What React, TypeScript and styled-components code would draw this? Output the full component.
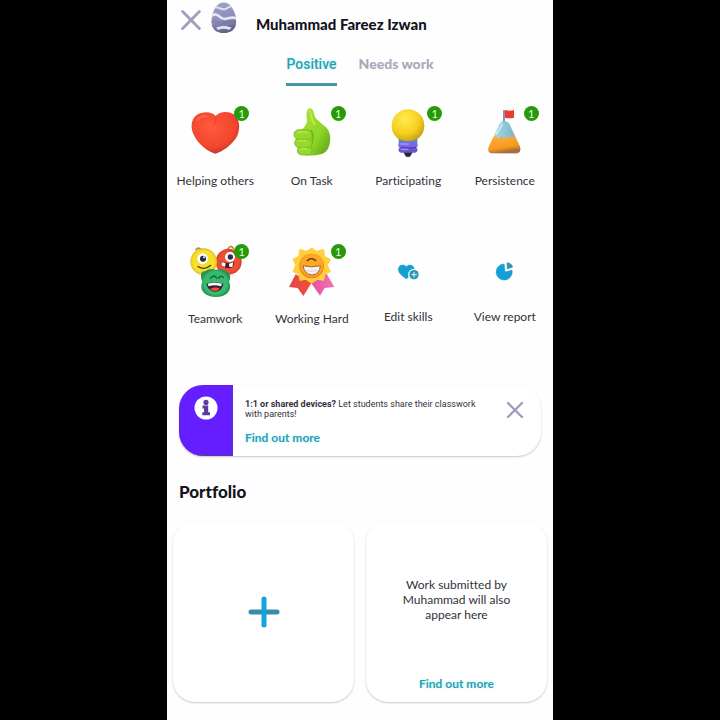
import React, { useState } from "react";
import styled, { createGlobalStyle } from "styled-components";

const GlobalStyle = createGlobalStyle`
  *, *::before, *::after { box-sizing: border-box; }
  body { margin: 0; background: #000; }
  button { border: 0; padding: 0; background: none; font: inherit; color: inherit; cursor: pointer; }
  svg { display: block; }
`;

const Screen = styled.main`
  width: 100%;
  max-width: 386px;
  min-height: 100vh;
  margin: 0 auto;
  padding-bottom: 18px;
  background: #fefefe;
  color: #33313c;
  font-family: Lato, "Open Sans", sans-serif;
  font-size: 12px;
  line-height: 15px;
  font-variant-ligatures: none;
`;

const Header = styled.header`
  display: flex;
  align-items: flex-start;
  height: 48px;
  padding-left: 12px;
`;

const CloseButton = styled.button`
  display: grid;
  place-items: center;
  width: 22px;
  height: 22px;
  margin-top: 8px;
  flex: none;
`;

const Avatar = styled.svg`
  width: 26px;
  height: 32px;
  margin: 2px 19px 0 10px;
  flex: none;
`;

const StudentName = styled.h1`
  margin: 14px 0 0;
  font-size: 15px;
  line-height: 20px;
  font-weight: 900;
  color: #15131d;
`;

const Tabs = styled.div`
  display: flex;
  justify-content: center;
  gap: 22px;
  height: 38px;
`;

const Tab = styled.button<{ $active: boolean }>`
  height: 38px;
  padding-bottom: 3px;
  border-bottom: 3px solid ${(p) => (p.$active ? "#4795a6" : "transparent")};
  color: ${(p) => (p.$active ? "#2b9fb0" : "#a8a9bd")};
  font-family: ${(p) => (p.$active ? "Roboto" : "Lato")}, sans-serif;
  font-size: 14px;
  line-height: 16px;
  font-weight: ${(p) => (p.$active ? 500 : 900)};
  text-shadow: ${(p) => (p.$active ? "0 0 3px #b8f8fc" : "none")};
`;

const Skills = styled.section`
  display: grid;
  grid-template-columns: repeat(4, 1fr);
  grid-auto-rows: 138px;
  padding-top: 18px;
`;

const Tile = styled.button`
  display: flex;
  flex-direction: column;
  align-items: center;
  justify-content: flex-start;
  gap: 13px;
  white-space: nowrap;
`;

const IconBox = styled.span`
  position: relative;
  display: block;
`;

const Art = styled.svg<{ $short?: boolean }>`
  width: 56px;
  height: ${(p) => (p.$short ? 54 : 56)}px;
`;

const Badge = styled.span`
  position: absolute;
  top: 2px;
  right: -6px;
  width: 15px;
  height: 15px;
  border-radius: 50%;
  background: #279a0b;
  color: #e4ffd9;
  font-size: 11px;
  line-height: 15px;
  text-align: center;
`;

const cardShadow = "0 1px 2px rgba(0, 0, 0, 0.22)";

const Notice = styled.section`
  display: flex;
  margin: 5px 12px 0;
  min-height: 71px;
  border-radius: 24px;
  overflow: hidden;
  background: #fff;
  box-shadow: ${cardShadow};
`;

const NoticeMark = styled.div`
  flex: none;
  width: 54px;
  padding: 11px 0 0 15px;
  background: #641eff;
  box-shadow: inset 0 -1px 2px #57418f;
`;

const NoticeBody = styled.div`
  flex: 1;
  padding: 14px 0 10px 12px;
`;

const NoticeText = styled.p`
  margin: 0 0 11px;
  font-family: Roboto, sans-serif;
  font-size: 9px;
  line-height: 10px;
`;

const NoticeClose = styled(CloseButton)`
  margin: 14px 15px 0 12px;
`;

const MoreLink = styled.a`
  display: inline-block;
  color: #2b9fb5;
  font-size: 12px;
  line-height: 15px;
  font-weight: 700;
  text-decoration: none;
  text-shadow: 0 0 3px #b5f5fb;
`;

const SectionTitle = styled.h2`
  margin: 26px 12px 0;
  font-size: 17px;
  line-height: 20px;
  font-weight: 900;
  color: #15131d;
`;

const Cards = styled.section`
  display: grid;
  grid-template-columns: 1fr 1fr;
  gap: 12px;
  padding: 19px 6px 0;
`;

const AddCard = styled.button`
  display: grid;
  place-items: center;
  aspect-ratio: 1;
  border-radius: 22px;
  background: #fff;
  box-shadow: ${cardShadow};
`;

const InfoCard = styled.article`
  display: flex;
  flex-direction: column;
  align-items: center;
  justify-content: space-between;
  aspect-ratio: 1;
  padding: 56px 30px 11px;
  border-radius: 22px;
  background: #fff;
  box-shadow: ${cardShadow};
  text-align: center;
`;

const InfoText = styled.p`
  margin: 0;
`;

const Cross = ({ size }: { size: number }) => (
  <svg width={size} height={size} viewBox="0 0 20 20" aria-hidden="true">
    <path d="M3 3 17 17M17 3 3 17" stroke="#a09fbd" strokeWidth="2.4" strokeLinecap="round" />
  </svg>
);

const Egg = () => (
  <Avatar viewBox="134 5 78 96" aria-hidden="true">
    <defs>
      <linearGradient id="egg" x1="0" y1="0" x2="0.3" y2="1">
        <stop offset="0" stopColor="#a6a7cd" />
        <stop offset="0.6" stopColor="#8d8eb9" />
        <stop offset="1" stopColor="#62628a" />
      </linearGradient>
      <clipPath id="eggShape">
        <path d="M172 6C196 6 210 42 210 64C210 86 194 98 172 98C150 98 135 86 135 64C135 42 148 6 172 6Z" />
      </clipPath>
    </defs>
    <g clipPath="url(#eggShape)">
      <rect x="134" y="5" width="78" height="96" fill="url(#egg)" />
      <path d="M140 23C154 14 160 28 174 27C184 26 188 14 200 19" fill="none" stroke="#dfe0f3" strokeWidth="6" />
      <path d="M132 49C146 36 154 44 166 53C180 63 190 44 212 55" fill="none" stroke="#e5e6f6" strokeWidth="8" />
      <path d="M132 67C144 56 154 67 168 72C184 78 194 64 212 72" fill="none" stroke="#8182ae" strokeWidth="4" />
      <path d="M149 82C164 75 182 75 196 82L188 89C178 84 166 84 156 89Z" fill="#e1e2f1" />
    </g>
  </Avatar>
);

const Heart = () => (
  <Art viewBox="51 27 168 168" aria-hidden="true">
    <defs>
      <radialGradient id="heart" cx="0.42" cy="0.35" r="0.7">
        <stop offset="0" stopColor="#ff5a3c" />
        <stop offset="0.7" stopColor="#f2452d" />
        <stop offset="1" stopColor="#b5382d" />
      </radialGradient>
    </defs>
    <path d="M137 63C126 49 98 48 80 60C61 75 61 101 73 123C86 149 116 171 136 176C156 171 189 148 202 122C213 97 208 71 191 58C173 47 149 49 137 63Z" fill="url(#heart)" />
    <path d="M137 66C138 76 136 84 130 90" fill="none" stroke="#d93423" strokeWidth="5" strokeLinecap="round" opacity="0.4" />
    <path d="M83 75C89 66 100 62 110 65" fill="none" stroke="#ff8266" strokeWidth="6" strokeLinecap="round" opacity="0.5" />
  </Art>
);

const Thumb = () => (
  <Art viewBox="342 27 168 168" aria-hidden="true">
    <defs>
      <linearGradient id="thumb" x1="0" y1="0" x2="1" y2="1">
        <stop offset="0" stopColor="#aee33a" />
        <stop offset="0.6" stopColor="#8ed526" />
        <stop offset="1" stopColor="#5a9c19" />
      </linearGradient>
    </defs>
    <path d="M416 41C425 36 431 47 433 60C437 75 454 83 468 97C485 114 484 147 471 166C460 181 434 183 403 181L390 175L388 108C401 101 411 88 411 75C409 61 408 46 416 41Z" fill="url(#thumb)" />
    <path d="M423 105C434 121 430 142 421 150L424 174" fill="none" stroke="#6fb324" strokeWidth="4" />
    <g fill="#95d82b" stroke="#6aac24" strokeWidth="2">
      <rect x="382" y="153" width="44" height="27" rx="13" />
      <rect x="374" y="129" width="52" height="29" rx="14" />
      <rect x="372" y="104" width="54" height="29" rx="14" />
    </g>
    <path d="M383 112H409M385 137H408M393 161H410" stroke="#b0e548" strokeWidth="6" strokeLinecap="round" />
    <path d="M419 48C426 66 425 80 434 89" fill="none" stroke="#bdea4b" strokeWidth="6" strokeLinecap="round" />
  </Art>
);

const Bulb = () => (
  <Art viewBox="60 27 168 168" aria-hidden="true">
    <defs>
      <radialGradient id="bulb" cx="0.4" cy="0.3" r="0.75">
        <stop offset="0" stopColor="#ffec52" />
        <stop offset="0.6" stopColor="#f6ce1c" />
        <stop offset="1" stopColor="#bd9719" />
      </radialGradient>
    </defs>
    <path d="M130 171H158L151 184Q144 188 137 184Z" fill="#262635" />
    <path d="M116 128H172V145H116Z" fill="#6186ad" />
    <circle cx="144" cy="92" r="49" fill="url(#bulb)" />
    <path d="M118 133Q144 145 170 133V146H118Z" fill="#5b86bd" />
    <rect x="115" y="142" width="58" height="16" rx="7" fill="#7868e8" />
    <rect x="116" y="156" width="56" height="17" rx="7" fill="#6855cf" />
    <path d="M122 157Q144 162 168 157" fill="none" stroke="#4b3ca5" strokeWidth="3" />
    <path d="M122 147H145M124 163H144" stroke="#a094ff" strokeWidth="4" strokeLinecap="round" />
  </Art>
);

const Mountain = () => (
  <Art viewBox="351 27 168 168" aria-hidden="true">
    <defs>
      <linearGradient id="peak" x1="0" x2="1">
        <stop offset="0" stopColor="#b5e5ee" />
        <stop offset="1" stopColor="#6fa9c1" />
      </linearGradient>
      <linearGradient id="base" x1="0" y1="0" x2="0.3" y2="1">
        <stop offset="0" stopColor="#ffb136" />
        <stop offset="0.75" stopColor="#f79a22" />
        <stop offset="1" stopColor="#a86d38" />
      </linearGradient>
    </defs>
    <rect x="429" y="45" width="6" height="40" rx="2" fill="#8a8bb8" />
    <path d="M435 45Q448 49 462 45V68Q448 72 435 68Z" fill="#e83b32" />
    <path d="M419 86Q433 68 448 86L479 153Q485 170 471 175H396Q379 173 387 154Z" fill="url(#peak)" />
    <path d="M399 128L407 122L415 131L424 122L434 135L445 120L453 130L464 122L480 156Q484 172 471 175H396Q380 173 387 154Z" fill="url(#base)" />
    <path d="M427 88L409 117" stroke="#cdeff3" strokeWidth="5" strokeLinecap="round" />
  </Art>
);

const Team = () => (
  <Art viewBox="51 21 168 168" aria-hidden="true">
    <defs>
      <radialGradient id="teamYellow"><stop offset="0.8" stopColor="#f8df2c" /><stop offset="1" stopColor="#e0bd25" /></radialGradient>
      <radialGradient id="teamRed"><stop offset="0.8" stopColor="#f04e32" /><stop offset="1" stopColor="#cf3f2b" /></radialGradient>
      <radialGradient id="teamGreen"><stop offset="0.8" stopColor="#35bb6b" /><stop offset="1" stopColor="#2b905a" /></radialGradient>
    </defs>
    <path d="M94 44Q84 35 78 44M173 44Q181 27 190 40" fill="none" stroke="#b98a38" strokeWidth="5" strokeLinecap="round" />
    <circle cx="176" cy="80" r="39" fill="url(#teamRed)" />
    <circle cx="101" cy="80" r="40" fill="url(#teamYellow)" />
    <path d="M105 109Q93 106 93 124Q93 135 97 140Q91 154 96 166Q107 186 136 186Q166 186 177 168Q184 153 177 141Q186 118 172 110Q158 99 137 104Q119 98 105 109Z" fill="url(#teamGreen)" />
    <circle cx="98" cy="71" r="16" fill="#fff" />
    <circle cx="99" cy="71" r="9" fill="#202b42" />
    <circle cx="102" cy="67" r="3" fill="#fff" />
    <path d="M84 95Q105 107 122 91" fill="none" stroke="#493c25" strokeWidth="4" strokeLinecap="round" />
    <circle cx="180" cy="66" r="15" fill="#fff" />
    <circle cx="181" cy="66" r="8" fill="#28304a" />
    <path d="M151 79Q171 89 193 80Q191 101 173 100Q156 97 151 79Z" fill="#421c29" />
    <path d="M154 81L167 85L165 95L156 92ZM177 86L190 82L187 95L178 96Z" fill="#fff" />
    <path d="M121 130Q134 116 140 130M146 129Q154 118 160 128" fill="none" stroke="#195d40" strokeWidth="4" strokeLinecap="round" />
    <path d="M109 146Q134 139 160 146Q156 170 135 170Q114 168 109 146Z" fill="#382133" />
    <path d="M113 146Q134 141 156 146L153 154Q134 148 116 154Z" fill="#fff" />
    <path d="M119 163Q134 153 150 162Q136 174 119 163Z" fill="#f05238" />
  </Art>
);

const SunAward = () => (
  <Art viewBox="342 21 168 168" aria-hidden="true">
    <defs>
      <linearGradient id="ribbonRed" x1="0" x2="1"><stop offset="0" stopColor="#dd4650" /><stop offset="1" stopColor="#f45133" /></linearGradient>
      <linearGradient id="ribbonPink" x1="0" x2="1"><stop offset="0" stopColor="#ef4ba7" /><stop offset="1" stopColor="#e979b4" /></linearGradient>
    </defs>
    <path d="M377 118L357 156L383 159L400 183L426 142Z" fill="url(#ribbonRed)" />
    <path d="M470 116L493 156L464 159L450 182L423 143Z" fill="url(#ribbonPink)" />
    <path d="M425 41L440 51L460 45L462 65L479 74L470 91L479 109L463 116L460 134L442 131L425 142L408 131L391 134L388 116L371 109L379 91L371 74L388 65L391 45L410 51Z" fill="#ffcf3c" stroke="#ffcf3c" strokeWidth="6" strokeLinejoin="round" />
    <circle cx="425" cy="93" r="37" fill="#e88a22" />
    <circle cx="425" cy="91" r="34" fill="#ffa622" />
    <path d="M412 77Q424 65 437 77" fill="none" stroke="#4b3025" strokeWidth="4" strokeLinecap="round" />
    <path d="M399 92Q425 99 451 92Q450 118 426 120Q403 118 399 92Z" fill="#f6f1f0" stroke="#a76534" strokeWidth="3" />
    <path d="M405 107Q426 111 446 106" fill="none" stroke="#cfc0bd" strokeWidth="2" />
  </Art>
);

const EditHeart = () => (
  <Art $short viewBox="60 21 168 162" aria-hidden="true">
    <path d="M139 95C131 86 119 89 115 98C110 111 128 125 139 132C150 125 167 111 162 97C157 87 145 87 139 95Z" fill="#169fd1" />
    <circle cx="162" cy="119" r="18" fill="#f1feff" />
    <circle cx="162" cy="119" r="14" fill="#3095b4" />
    <path d="M155 119H169M162 112V126" stroke="#e3fcff" strokeWidth="3" strokeLinecap="round" />
  </Art>
);

const Pie = () => (
  <Art $short viewBox="351 21 168 162" aria-hidden="true">
    <path d="M432 87A24 24 0 1 0 456 106L435 111Z" fill="#149fd5" stroke="#149fd5" strokeWidth="2" strokeLinejoin="round" />
    <path d="M441 83Q454 84 458 96L442 102Z" fill="#3b91ad" stroke="#3b91ad" strokeWidth="2" strokeLinejoin="round" />
  </Art>
);

const awards = [
  { label: "Helping others", Icon: Heart },
  { label: "On Task", Icon: Thumb },
  { label: "Participating", Icon: Bulb },
  { label: "Persistence", Icon: Mountain },
  { label: "Teamwork", Icon: Team },
  { label: "Working Hard", Icon: SunAward },
];

const actions = [
  { label: "Edit skills", Icon: EditHeart },
  { label: "View report", Icon: Pie },
];

export default function App() {
  const [tab, setTab] = useState("Positive");
  return (
    <>
      <GlobalStyle />
      <Screen>
        <Header>
          <CloseButton aria-label="Close"><Cross size={24} /></CloseButton>
          <Egg />
          <StudentName>Muhammad Fareez Izwan</StudentName>
        </Header>
        <Tabs role="tablist">
          {["Positive", "Needs work"].map((name) => (
            <Tab key={name} role="tab" aria-selected={tab === name} $active={tab === name} onClick={() => setTab(name)}>
              {name}
            </Tab>
          ))}
        </Tabs>
        <Skills>
          {awards.map(({ label, Icon }) => (
            <Tile key={label}>
              <IconBox><Icon /><Badge>1</Badge></IconBox>
              <span>{label}</span>
            </Tile>
          ))}
          {actions.map(({ label, Icon }) => (
            <Tile key={label}>
              <IconBox><Icon /></IconBox>
              <span>{label}</span>
            </Tile>
          ))}
        </Skills>
        <Notice>
          <NoticeMark>
            <svg width="24" height="24" viewBox="0 0 24 24" aria-hidden="true">
              <circle cx="12" cy="12" r="11.5" fill="#fff" />
              <circle cx="12" cy="6.4" r="2.6" fill="#5d3a9e" />
              <path d="M8.5 9.6H14.2V16.2H16V19.2H8.3V16.2H10V12.4H8.5Z" fill="#5d3a9e" />
            </svg>
          </NoticeMark>
          <NoticeBody>
            <NoticeText><b>1:1 or shared devices?</b> Let students share their classwork with parents!</NoticeText>
            <MoreLink href="#devices">Find out more</MoreLink>
          </NoticeBody>
          <NoticeClose aria-label="Dismiss"><Cross size={20} /></NoticeClose>
        </Notice>
        <SectionTitle>Portfolio</SectionTitle>
        <Cards>
          <AddCard aria-label="Add to portfolio">
            <svg width="32" height="32" viewBox="0 0 32 32" aria-hidden="true">
              <path d="M3 16H29" stroke="#358fab" strokeWidth="5" strokeLinecap="round" />
              <path d="M16 3V29" stroke="#12a4dc" strokeWidth="5" strokeLinecap="round" />
            </svg>
          </AddCard>
          <InfoCard>
            <InfoText>Work submitted by Muhammad will also appear here</InfoText>
            <MoreLink href="#portfolio">Find out more</MoreLink>
          </InfoCard>
        </Cards>
      </Screen>
    </>
  );
}
